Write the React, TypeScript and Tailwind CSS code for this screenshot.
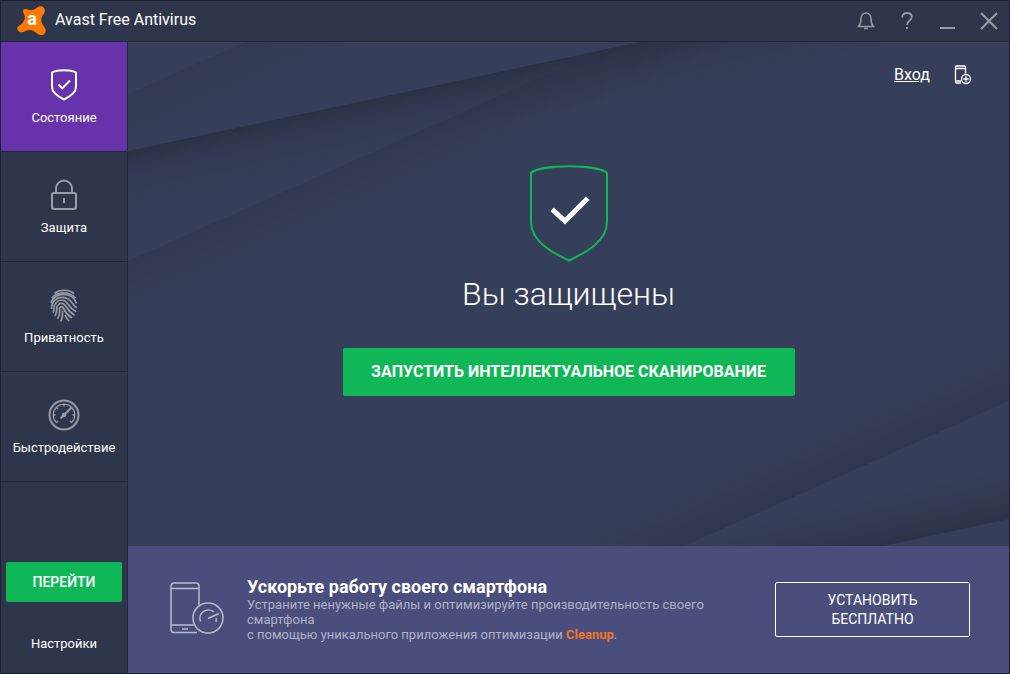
import type { ReactNode } from 'react';

const iconProps = { fill: 'none', stroke: 'currentColor' } as const;

function Logo() {
  return (
    <div className="relative flex h-[30px] w-[30px] items-center justify-center">
      <svg className="absolute inset-0" width="30" height="30" viewBox="0 0 30 30" aria-hidden="true">
        <path
          fill="#ff7800"
          d="M6 5.500C6 3 8.500 2.500 10.500 3.500C14 5 16.500 4.200 19.500 2C22.500-.8 27.200 0 27.800 4C28.200 6.500 26.500 8 25.300 10C23.800 12.800 23.800 15.500 25.500 18.500C26.700 20.500 28.800 22 28.800 24.800C28.500 28.500 25 30.300 21.500 28.500C18.500 26.500 16.500 24.200 13 24C9.500 23.800 7 26.300 4.500 26.300C1 26.300-.8 23 .8 20.800C2.300 19 4.700 18.500 6.200 16C7.500 13.500 8.400 12 7.500 9.500C7 8 6 7.200 6 5.500Z"
        />
      </svg>
      <span className="relative pb-1 text-[18px] leading-none font-bold text-white">a</span>
    </div>
  );
}

function StatusIcon() {
  return (
    <svg width="32" height="32" viewBox="0 0 32 32" strokeWidth="2" aria-hidden="true" {...iconProps}>
      <path d="M4 3.500C9 .4 23 .4 28 3.500V18C28 24 20 28.500 16 30.500C12 28.500 4 24 4 18Z" />
      <path d="M10.500 15.500L14.300 19.300L22 11.500" />
    </svg>
  );
}

function LockIcon() {
  return (
    <svg width="32" height="32" viewBox="0 0 32 32" strokeWidth="2" aria-hidden="true" {...iconProps}>
      <rect x="4" y="14" width="24" height="16" rx="2" />
      <path d="M8 14V9.500A8 8 0 0 1 24 9.500V14M16 19V24" />
    </svg>
  );
}

function FingerprintIcon() {
  return (
    <svg width="32" height="34" viewBox="0 0 32 34" strokeWidth="1.700" aria-hidden="true" {...iconProps}>
      <path d="M6.500 4.200C12 .2 21 .2 26 4.500" />
      <path d="M3.800 9C9 2.200 21 1.800 27.500 9" />
      <path d="M3 14C5 8 10 5.300 15.500 5.300C22 5.300 27 9 28.500 14.500" />
      <path d="M3.500 20C3.500 13 8 8.300 14.500 8.300C20.500 8.300 23 12 25 15C26.300 16.800 27.500 18 28.800 18.800" />
      <path d="M5 23.800C7 20 5 17 7.800 14C11.500 10 17 10.500 19.500 14.500C22 18.500 25 21 28.200 22.800" />
      <path d="M7 27C10 22 7.500 19 10 16C12.500 13.500 15.800 14 17.500 17C19.500 20.500 23 24 26.500 26.200" />
      <path d="M9.500 29.800C13.500 24 10.500 21 12 18.700C13.500 16.800 15 18 15.500 19.500C17.500 23.500 20.500 26.800 24 29" />
      <path d="M12.500 32.500C14.800 29 15 26.500 14.300 21.500M17 26C18 28.500 19.500 30.500 21 32" />
    </svg>
  );
}

function GaugeIcon() {
  return (
    <svg width="32" height="32" viewBox="0 0 32 32" strokeWidth="2" aria-hidden="true" {...iconProps}>
      <circle cx="16" cy="16" r="14.500" />
      <path
        strokeWidth="1.300"
        d="M8.400 23.600A10.800 10.800 0 1 1 23.600 23.600M8.400 23.600L10 22M23.600 23.600L22 22M5.200 16H7.500M26.800 16H24.500M16 5.200V7.500M8.400 8.400L10 10"
      />
      <path strokeWidth="2" d="M12.500 19.500L23.500 8.500" />
      <circle cx="16" cy="16" r="2.300" fill="currentColor" stroke="none" />
    </svg>
  );
}

function BellIcon() {
  return (
    <svg width="18" height="20" viewBox="0 0 18 20" strokeWidth="1.500" aria-hidden="true" {...iconProps}>
      <path d="M1.500 15.500C3.500 13.500 4 11.500 4 8C4 4.500 6 2 9 2C12 2 14 4.500 14 8C14 11.500 14.500 13.500 16.500 15.500Z" />
      <path d="M7 17.500H11" />
    </svg>
  );
}

function HelpIcon() {
  return (
    <svg width="14" height="20" viewBox="0 0 14 20" strokeWidth="1.800" aria-hidden="true" {...iconProps}>
      <path d="M2.300 6.500C2.300 3.500 4 2 7 2C10 2 11.800 3.500 11.800 6C11.800 9.500 7 9.500 7 14" />
      <path d="M7 16V18" strokeWidth="2" />
    </svg>
  );
}

function AddDeviceIcon() {
  return (
    <svg width="18" height="20" viewBox="0 0 18 20" strokeWidth="1.300" aria-hidden="true" {...iconProps}>
      <path d="M7 18H2.500A1 1 0 0 1 1.500 17V2A1 1 0 0 1 2.500 1H10.500A1 1 0 0 1 11.500 2V8.500M1.500 3.500H11.500M1.500 16H7" />
      <circle cx="12" cy="14" r="4.500" />
      <path d="M12 11.300V16.700M9.300 14H14.700" />
    </svg>
  );
}

function PhoneIcon() {
  return (
    <svg width="54" height="52" viewBox="0 0 54 52" strokeWidth="1.500" aria-hidden="true" {...iconProps}>
      <path d="M27 50.500H4A3 3 0 0 1 1 47.500V4A3 3 0 0 1 4 1H26A3 3 0 0 1 29 4V23M1 6.500H29M1 43H24M12 47H18" />
      <circle cx="38" cy="36" r="15" />
      <path d="M30.500 39.500A8.500 8.500 0 0 1 44 30M46 36A8.500 8.500 0 0 1 46 40M38 36.500L49 31.500" />
    </svg>
  );
}

// Layered diagonal folds behind the main panel
function Backdrop() {
  return (
    <svg
      className="absolute inset-0 h-full w-full"
      viewBox="0 0 881 504"
      preserveAspectRatio="none"
      aria-hidden="true"
    >
      <defs>
        <linearGradient id="foldA" gradientUnits="userSpaceOnUse" x1="0" y1="52" x2="20" y2="97">
          <stop offset="0" stopColor="#2b3348" stopOpacity=".35" />
          <stop offset="1" stopColor="#2b3348" stopOpacity="0" />
        </linearGradient>
        <linearGradient id="foldB" gradientUnits="userSpaceOnUse" x1="0" y1="109" x2="12" y2="165">
          <stop offset="0" stopColor="#262e40" stopOpacity=".8" />
          <stop offset=".4" stopColor="#2a3348" stopOpacity=".4" />
          <stop offset="1" stopColor="#2b3348" stopOpacity="0" />
        </linearGradient>
        <linearGradient id="foldC" gradientUnits="userSpaceOnUse" x1="0" y1="219" x2="20" y2="264">
          <stop offset="0" stopColor="#2b3048" stopOpacity=".4" />
          <stop offset="1" stopColor="#2b3048" stopOpacity="0" />
        </linearGradient>
        <linearGradient id="foldD" gradientUnits="userSpaceOnUse" x1="881" y1="359" x2="861" y2="314">
          <stop offset="0" stopColor="#2b3048" stopOpacity=".55" />
          <stop offset="1" stopColor="#2b3048" stopOpacity="0" />
        </linearGradient>
        <linearGradient id="foldE" gradientUnits="userSpaceOnUse" x1="881" y1="477" x2="870" y2="427">
          <stop offset="0" stopColor="#262e40" stopOpacity=".7" />
          <stop offset="1" stopColor="#2b3348" stopOpacity="0" />
        </linearGradient>
      </defs>
      <path fill="url(#foldA)" d="M0 52L117 0H512L0 109Z" />
      <path fill="url(#foldB)" d="M0 109L512 0H881V504H0Z" />
      <path fill="url(#foldC)" d="M0 219L474 8L512 0H881V504H0Z" />
      <path fill="url(#foldD)" d="M881 359L556 504H0V0H881Z" />
      <path fill="url(#foldE)" d="M881 359L556 504H756L881 477Z" />
    </svg>
  );
}

const navItems: { label: string; icon: ReactNode; active?: boolean }[] = [
  { label: 'Состояние', icon: <StatusIcon />, active: true },
  { label: 'Защита', icon: <LockIcon /> },
  { label: 'Приватность', icon: <FingerprintIcon /> },
  { label: 'Быстродействие', icon: <GaugeIcon /> },
];

function TitleBar() {
  return (
    <header className="flex h-[41px] shrink-0 items-center justify-between border-b border-[#22283b] bg-[#2e364c] pl-4">
      <div className="flex items-center gap-2">
        <Logo />
        <h1 className="pb-0.5 text-[16px] text-white">Avast Free Antivirus</h1>
      </div>
      <div className="flex items-center text-[#989ca8]">
        <button aria-label="Уведомления" className="flex w-[41px] justify-center">
          <BellIcon />
        </button>
        <button aria-label="Справка" className="flex w-[41px] justify-center">
          <HelpIcon />
        </button>
        <button aria-label="Свернуть" className="flex w-[41px] justify-center">
          <svg width="16" height="20" viewBox="0 0 16 20" strokeWidth="2" {...iconProps}>
            <path d="M0 17H15" />
          </svg>
        </button>
        <button aria-label="Закрыть" className="flex w-[41px] justify-center">
          <svg width="18" height="18" viewBox="0 0 18 18" strokeWidth="2" {...iconProps}>
            <path d="M1 1L17 17M17 1L1 17" />
          </svg>
        </button>
      </div>
    </header>
  );
}

function Sidebar() {
  return (
    <aside className="flex w-[127px] shrink-0 flex-col border-r border-[#22283b] bg-[#2e364c]">
      <nav>
        {navItems.map((item) => (
          <button
            key={item.label}
            className={`flex h-[110px] w-full flex-col items-center gap-2 border-b border-[#22283b] pt-[27px] text-[13px] leading-4 text-white ${
              item.active ? 'bg-[#6633aa]' : ''
            }`}
          >
            <span className={`h-[33px] ${item.active ? 'text-white' : 'text-[#989ca8]'}`}>{item.icon}</span>
            {item.label}
          </button>
        ))}
      </nav>
      <div className="mt-auto flex flex-col items-center px-1 pb-[19px]">
        <button className="h-10 w-[116px] rounded-xs bg-[#10b756] text-[14px] font-medium text-white">
          ПЕРЕЙТИ
        </button>
        <button className="mt-8 text-[13px] leading-5 text-white">Настройки</button>
      </div>
    </aside>
  );
}

function Promo() {
  return (
    <section className="flex min-h-[127px] shrink-0 items-center bg-[#494e7c] pr-[39px] pl-[42px]">
      <span className="shrink-0 pb-1 text-[#b9bbcd]">
        <PhoneIcon />
      </span>
      <div className="ml-[23px] min-w-0 flex-1 pr-12">
        <h3 className="text-[18px] leading-5 font-bold text-white">Ускорьте работу своего смартфона</h3>
        <p className="text-[13px] leading-[15px] text-[#b0b2c8]">
          Устраните ненужные файлы и оптимизируйте производительность своего смартфона
          <br />с помощью уникального приложения оптимизации{' '}
          <a href="#cleanup" className="font-bold text-[#f47521]">
            Cleanup
          </a>
          .
        </p>
      </div>
      <button className="h-[55px] w-[195px] shrink-0 rounded-xs border border-white px-10 text-[14px] leading-[19px] text-white">
        УСТАНОВИТЬ БЕСПЛАТНО
      </button>
    </section>
  );
}

export default function App() {
  return (
    <div className="flex min-h-screen flex-col border border-[#1c2033] bg-[#363f59] font-['Roboto','Liberation_Sans',sans-serif]">
      <TitleBar />
      <div className="flex flex-1">
        <Sidebar />
        <div className="flex min-w-0 flex-1 flex-col">
          <main className="relative flex flex-1 flex-col">
            <Backdrop />
            <div className="relative flex h-[65px] items-center justify-end gap-6 pr-[37px] text-white">
              <a href="#login" className="text-[16px] underline">
                Вход
              </a>
              <button aria-label="Добавить устройство">
                <AddDeviceIcon />
              </button>
            </div>
            <div className="relative flex flex-col items-center pt-[57px] text-white">
              <svg width="80" height="98" viewBox="0 0 80 98" fill="none" aria-hidden="true">
                <path
                  stroke="#10b756"
                  strokeWidth="2"
                  d="M2 9C12 0 68 0 78 9V58C78 77 58 88 40 96.500C22 88 2 77 2 58Z"
                />
                <path stroke="#fff" strokeWidth="5" strokeLinecap="square" d="M25 47L36 57L57 36" />
              </svg>
              <h2 className="mt-3 text-[32px] leading-10 font-light">Вы защищены</h2>
              <button className="mt-[34px] h-12 w-[452px] rounded-xs bg-[#10b756] text-[16px] font-bold">
                ЗАПУСТИТЬ ИНТЕЛЛЕКТУАЛЬНОЕ СКАНИРОВАНИЕ
              </button>
            </div>
          </main>
          <Promo />
        </div>
      </div>
    </div>
  );
}
